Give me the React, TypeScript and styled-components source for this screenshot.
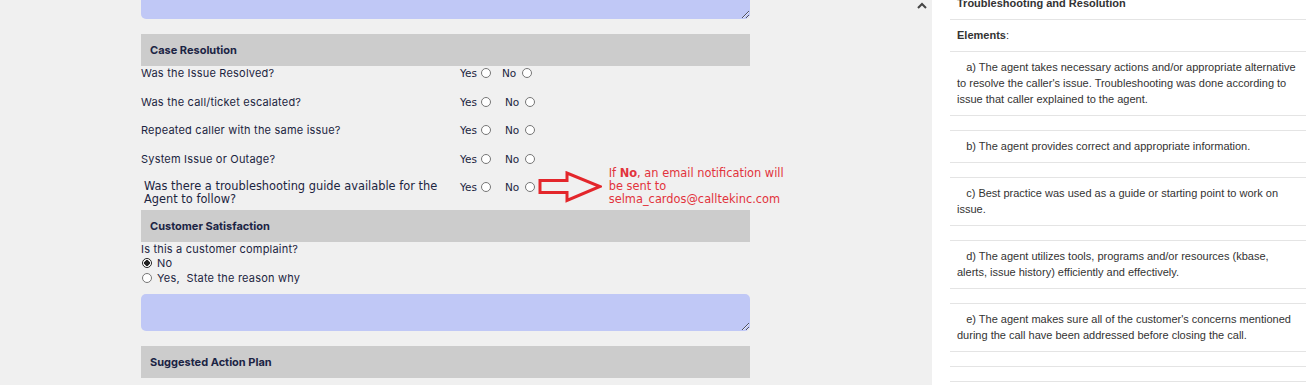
import styled, { createGlobalStyle } from "styled-components";

const GlobalStyle = createGlobalStyle`
  html, body {
    margin: 0;
    padding: 0;
  }
  body {
    background: #f0f0f0;
    overflow: hidden;
  }
`;

const Page = styled.div`
  display: flex;
  width: 1307px;
  height: 385px;
  overflow: hidden;
`;

const FormPane = styled.div`
  width: 932px;
  display: flex;
  background: #f0f0f0;
`;

const FormColumn = styled.div`
  width: 609px;
  flex: none;
  margin-left: 141px;
  margin-top: -18px;
  font-family: Inter, "Open Sans", sans-serif;
  font-size: 11px;
  letter-spacing: 0.2px;
  color: #1c2541;
`;

const Collapse = styled.div`
  flex: 1;
  display: flex;
  justify-content: flex-end;
  align-items: flex-start;
  padding: 2px 5px 0 0;
  color: #444;
`;

const Notes = styled.textarea`
  display: block;
  width: 100%;
  height: 37px;
  box-sizing: border-box;
  margin: 0;
  border: none;
  border-radius: 5px;
  background: #c0c8f6;
  resize: vertical;
  outline: none;
`;

const SectionHeader = styled.div<{ $gap?: number }>`
  margin-top: ${(props) => props.$gap ?? 15}px;
  height: 32px;
  display: flex;
  align-items: center;
  padding-left: 9px;
  background: #cccccc;
  font-weight: 700;
  font-size: 11px;
  letter-spacing: 0;
  color: #1b2444;
`;

const QuestionList = styled.div`
  padding-bottom: 4px;
`;

const QuestionRow = styled.div<{ $tall?: boolean }>`
  display: flex;
  align-items: flex-start;
  min-height: ${(props) => (props.$tall ? "26px" : "28.5px")};
  line-height: 14px;
`;

const Question = styled.div<{ $legacy?: boolean }>`
  flex: none;
  width: ${(props) => (props.$legacy ? "316px" : "319px")};
  padding-left: ${(props) => (props.$legacy ? "3px" : "0")};
  ${(props) =>
    props.$legacy
      ? `font-family: "DejaVu Sans", Verdana, sans-serif; font-size: 11.4px; line-height: 13px; letter-spacing: 0;`
      : ""}
`;

const Options = styled.div<{ $lineHeight?: number }>`
  display: flex;
  align-items: center;
  height: ${(props) => props.$lineHeight ?? 14}px;
  font-family: "DejaVu Sans", Verdana, sans-serif;
  font-size: 10.5px;
  letter-spacing: 0;
  color: #1c2541;
`;

const Choice = styled.label<{ $gap?: number; $inner?: number }>`
  display: inline-flex;
  align-items: center;
  gap: ${(props) => props.$inner ?? 4}px;
  margin-left: ${(props) => props.$gap ?? 0}px;
  flex: none;
`;

const Radio = styled.input.attrs({ type: "radio" })`
  appearance: none;
  flex: none;
  margin: 0;
  width: 10px;
  height: 10px;
  box-sizing: border-box;
  border: 1px solid #767676;
  border-radius: 50%;
  background: #fff;
  &:checked {
    border-color: #222;
    background: radial-gradient(circle, #222 0 2.6px, #fff 3px);
  }
`;

const Arrow = styled.svg`
  margin-left: 3px;
  flex: none;
`;

const Notice = styled.div`
  width: 190px;
  margin-left: 7px;
  flex: none;
  font-family: "DejaVu Sans", Verdana, sans-serif;
  font-size: 11.4px;
  line-height: 13px;
  color: #e2333c;
  b {
    font-weight: 700;
  }
`;

const Complaint = styled.div`
  line-height: 14.3px;
  padding-bottom: 9px;
`;

const ComplaintOption = styled.label`
  display: flex;
  align-items: center;
  gap: 5px;
  padding-left: 1px;
`;

const Guide = styled.aside`
  width: 375px;
  box-sizing: border-box;
  padding: 0 1px 0 18px;
  margin-top: -12px;
  background: #fff;
  font-family: "Liberation Sans", Arial, sans-serif;
  font-size: 11px;
  line-height: 16px;
  color: #333;
`;

const GuideRow = styled.div<{ $empty?: boolean }>`
  border-bottom: 1px solid #e4e4e4;
  padding: ${(props) => (props.$empty ? "0" : "7px 7px 8px")};
  height: ${(props) => (props.$empty ? "14px" : "auto")};
  b {
    font-weight: 700;
  }
`;

const questions = [
  { text: "Was the Issue Resolved?", gap: 11 },
  { text: "Was the call/ticket escalated?", gap: 14 },
  { text: "Repeated caller with the same issue?", gap: 14 },
  { text: "System Issue or Outage?", gap: 14 },
];

const elements = [
  "a) The agent takes necessary actions and/or appropriate alternative to resolve the caller's issue. Troubleshooting was done according to issue that caller explained to the agent.",
  "b) The agent provides correct and appropriate information.",
  "c) Best practice was used as a guide or starting point to work on issue.",
  "d) The agent utilizes tools, programs and/or resources (kbase, alerts, issue history) efficiently and effectively.",
  "e) The agent makes sure all of the customer's concerns mentioned during the call have been addressed before closing the call.",
];

function YesNo({ name, gap }: { name: string; gap: number }) {
  return (
    <>
      <Choice>
        Yes <Radio name={name} />
      </Choice>
      <Choice $gap={gap} $inner={5.5}>
        No <Radio name={name} />
      </Choice>
    </>
  );
}

function App() {
  return (
    <>
      <GlobalStyle />
      <Page>
        <FormPane>
          <FormColumn>
            <Notes />
            <SectionHeader>Case Resolution</SectionHeader>
            <QuestionList>
              {questions.map((q, i) => (
                <QuestionRow key={q.text}>
                  <Question>{q.text}</Question>
                  <Options>
                    <YesNo name={`q${i}`} gap={q.gap} />
                  </Options>
                </QuestionRow>
              ))}
              <QuestionRow $tall>
                <Question $legacy>
                  Was there a troubleshooting guide available for the Agent to
                  follow?
                </Question>
                <Options $lineHeight={13}>
                  <YesNo name="guide" gap={14} />
                  <Arrow width="64" height="32" viewBox="0 0 64 32">
                    <polygon
                      points="2,9.5 29,9.5 29,2 62,15.5 29,29.5 29,21.5 2,21.5"
                      fill="none"
                      stroke="#e3262b"
                      strokeWidth="3"
                    />
                  </Arrow>
                  <Notice>
                    If <b>No</b>, an email notification will be sent to
                    selma_cardos@calltekinc.com
                  </Notice>
                </Options>
              </QuestionRow>
            </QuestionList>
            <SectionHeader $gap={0}>Customer Satisfaction</SectionHeader>
            <Complaint>
              <div>Is this a customer complaint?</div>
              <ComplaintOption>
                <Radio name="complaint" defaultChecked />
                No
              </ComplaintOption>
              <ComplaintOption>
                <Radio name="complaint" />
                Yes,&nbsp; State the reason why
              </ComplaintOption>
            </Complaint>
            <Notes />
            <SectionHeader>Suggested Action Plan</SectionHeader>
          </FormColumn>
          <Collapse>
            <svg width="10" height="7" viewBox="0 0 10 7">
              <polyline
                points="1,6 5,2 9,6"
                fill="none"
                stroke="currentColor"
                strokeWidth="2"
              />
            </svg>
          </Collapse>
        </FormPane>
        <Guide>
          <GuideRow>
            <b>Troubleshooting and Resolution</b>
          </GuideRow>
          <GuideRow>
            <b>Elements</b>:
          </GuideRow>
          {elements.map((text) => (
            <div key={text}>
              <GuideRow>{"\u00a0\u00a0\u00a0" + text}</GuideRow>
              <GuideRow $empty />
            </div>
          ))}
          <GuideRow $empty />
        </Guide>
      </Page>
    </>
  );
}

export default App;
